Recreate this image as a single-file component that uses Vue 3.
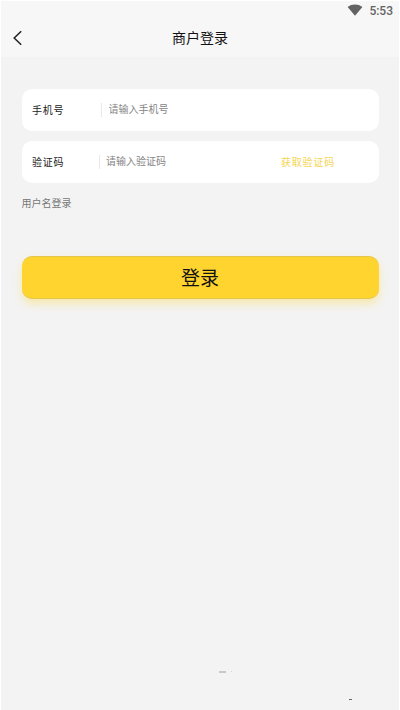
<script setup>
import { ref } from 'vue'

const phone = ref('')
const code = ref('')
</script>

<template>
  <main class="screen">
    <header class="header">
      <div class="status">
        <svg class="wifi" viewBox="0 0 16 12" aria-hidden="true">
          <path d="M0.6 3C4.8-.3 11.2-.3 15.4 3L8 11.7Z" fill="#626262" />
        </svg>
        <span class="clock">5:53</span>
      </div>
      <div class="nav">
        <svg class="back" viewBox="0 0 10 16" aria-hidden="true">
          <path d="M9.2 1.2 2.2 8l7 6.8" fill="none" stroke="#222" stroke-width="1.5" />
        </svg>
        <h1 class="title">商户登录</h1>
      </div>
    </header>

    <form class="form" @submit.prevent>
      <label class="field">
        <span class="label">手机号</span>
        <span class="divider"></span>
        <input v-model="phone" class="input" placeholder="请输入手机号" />
      </label>
      <label class="field field-code">
        <span class="label">验证码</span>
        <span class="divider"></span>
        <input v-model="code" class="input" placeholder="请输入验证码" />
        <button type="button" class="send">获取验证码</button>
      </label>
      <a class="switch">用户名登录</a>
      <button class="submit">登录</button>
    </form>

    <footer class="footer">
      <div class="mark"><i class="mark-line"></i><i class="mark-dot"></i></div>
      <i class="dash"></i>
    </footer>
  </main>
</template>

<style>
body {
  margin: 0;
  background: #fff;
}
</style>

<style scoped>
.screen {
  box-sizing: border-box;
  width: 400px;
  height: 710px;
  border: solid #fff;
  border-width: 1px 1px 0 1px;
  background: #f3f3f3;
  font-family: Roboto, "Noto Sans CJK SC", sans-serif;
  display: flex;
  flex-direction: column;
  overflow: hidden;
}
.header {
  height: 56px;
  background: #f7f7f7;
}
.status {
  height: 19px;
  display: flex;
  justify-content: flex-end;
  align-items: flex-start;
  gap: 6px;
  padding-right: 6px;
}
.wifi {
  width: 16px;
  height: 12px;
  margin-top: 3px;
}
.clock {
  font-size: 12px;
  line-height: 21px;
  font-weight: 500;
  color: #626262;
}
.nav {
  height: 37px;
  display: grid;
  grid-template-columns: 50px 1fr 50px;
}
.back {
  width: 10px;
  height: 16px;
  margin: 10px 0 0 11px;
}
.title {
  margin: 0;
  text-align: center;
  font-size: 14px;
  line-height: 36px;
  font-weight: 400;
  color: #111;
}
.form {
  padding: 31.5px 20.5px 0 20.5px;
  display: flex;
  flex-direction: column;
}
.field {
  box-sizing: border-box;
  height: 42.5px;
  display: flex;
  align-items: center;
  padding-left: 10.5px;
  border-radius: 10px;
  background: #fff;
}
.field-code {
  margin-top: 9.5px;
}
.label {
  width: 69px;
  font-size: 10px;
  letter-spacing: 0.8px;
  color: #222;
}
.field-code .label {
  width: 67px;
}
.divider {
  width: 1px;
  height: 14px;
  margin-right: 6.5px;
  background: #e9e9e9;
}
.input {
  width: 174.5px;
  padding: 1px 0 0;
  border: 0;
  outline: 0;
  background: transparent;
  font: 10px/16px Roboto, "Noto Sans CJK SC", sans-serif;
  color: #333;
}
.field-code .input {
  margin-left: -0.5px;
  width: 175px;
}
.input::placeholder {
  color: #858585;
  opacity: 1;
}
.send {
  padding: 2px 0 0;
  border: 0;
  background: transparent;
  font: 10px/16px Roboto, "Noto Sans CJK SC", sans-serif;
  letter-spacing: 0.8px;
  color: #f5d552;
}
.switch {
  margin-top: 13px;
  font-size: 10px;
  line-height: 16px;
  color: #777;
}
.submit {
  box-sizing: border-box;
  height: 43px;
  margin-top: 43.5px;
  padding: 2px 0 0;
  border: solid #e6c64a;
  border-width: 1px 0;
  border-radius: 10px;
  background: #ffd42e;
  box-shadow: 0 5px 9px rgba(255, 212, 46, 0.35);
  font: 19px/39px Roboto, "Noto Sans CJK SC", sans-serif;
  color: #111;
}
.footer {
  margin-top: auto;
  height: 39px;
  display: flex;
  flex-direction: column;
}
.mark {
  display: flex;
  gap: 5px;
  margin-left: 218px;
}
.mark-line {
  width: 7px;
  height: 2px;
  background: #c8c8c8;
}
.mark-dot {
  width: 1px;
  height: 1px;
  background: #d5d5d5;
}
.dash {
  width: 3px;
  height: 1px;
  margin: 26px 0 0 348px;
  background: #666;
}
</style>
